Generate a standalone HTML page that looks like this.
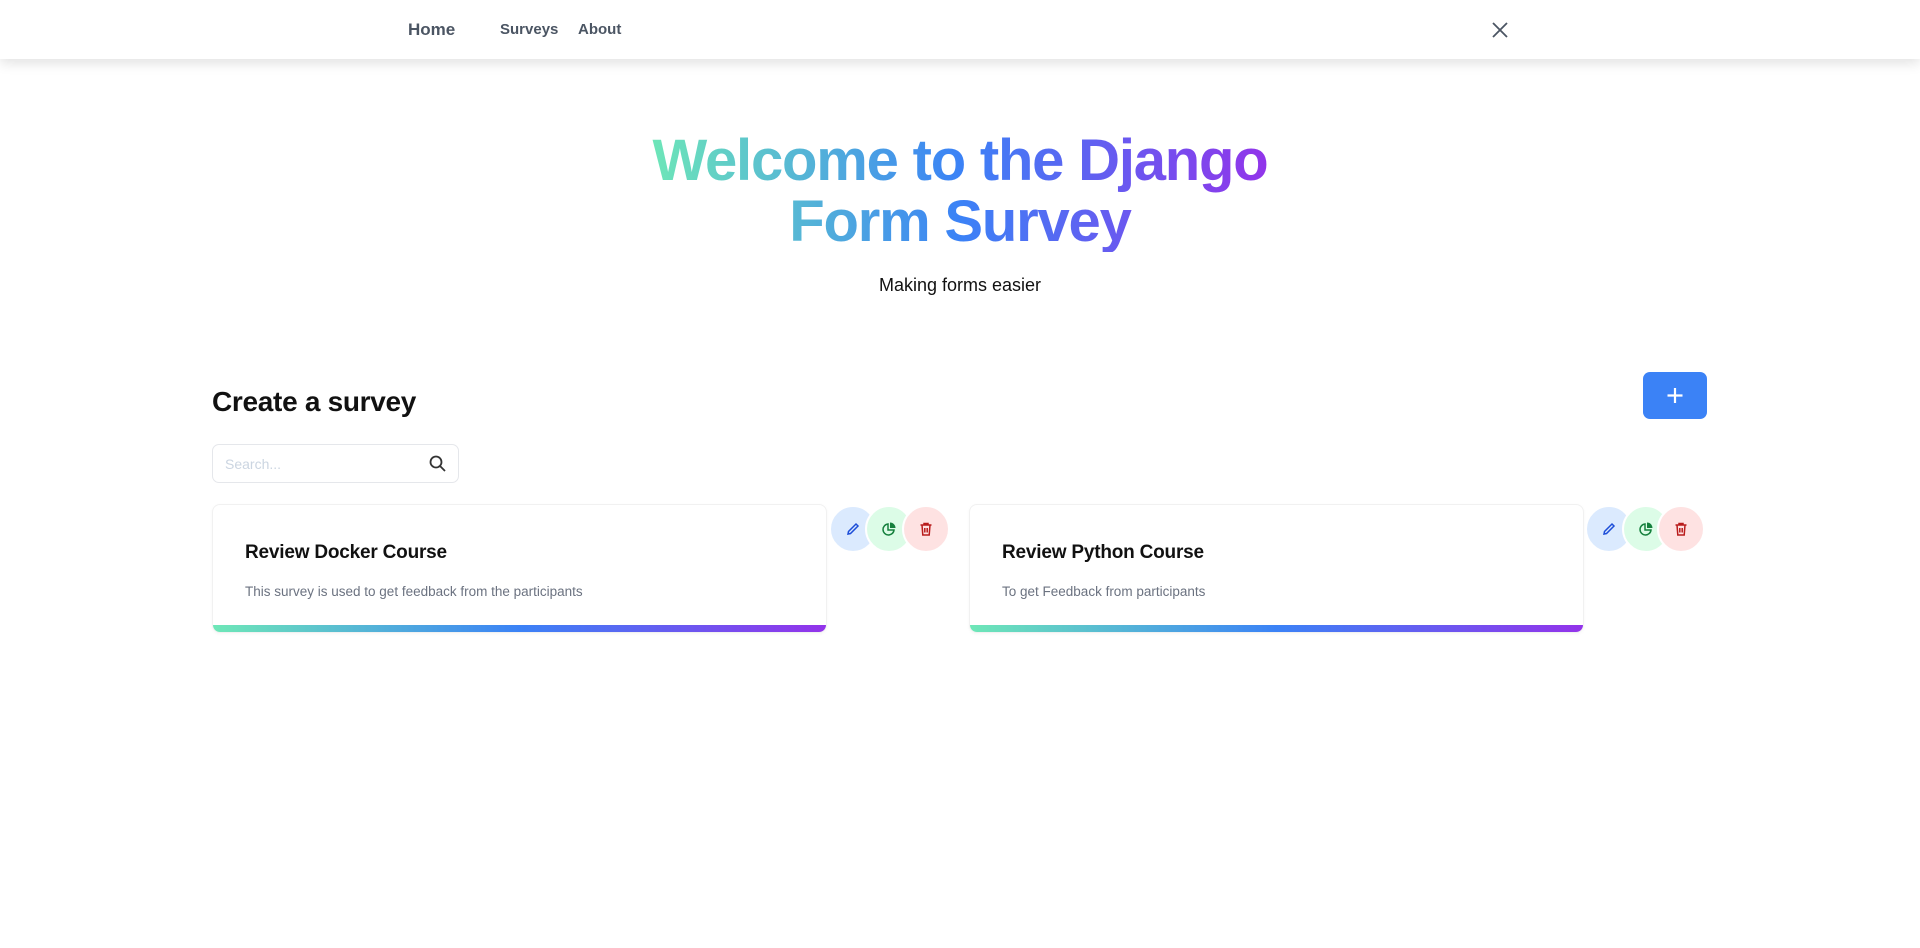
<!DOCTYPE html>
<html><head><meta charset="utf-8"><style>
*{box-sizing:border-box;margin:0;padding:0}
body{width:1920px;height:948px;background:#fff;font-family:"Liberation Sans",Roboto,sans-serif;position:relative;overflow:hidden}
nav{position:absolute;left:0;top:0;width:1920px;height:59px;background:#fff;box-shadow:0 4px 12px rgba(0,0,0,.12)}
.nl{position:absolute;top:21px;color:#4b5563;font-weight:bold;font-size:15px}
.x{position:absolute;left:1490px;top:20px}
h1{position:absolute;left:0;width:1920px;top:130px;text-align:center;font-size:58px;line-height:61px;font-weight:bold;letter-spacing:-1.2px}
h1 span{background:linear-gradient(90deg,#6ee7b7,#3b82f6,#9333ea);-webkit-background-clip:text;background-clip:text;color:transparent;display:inline-block;padding:0 4px}
.sub{position:absolute;left:0;width:1920px;top:275px;text-align:center;font-size:18px;color:#111}
h2{position:absolute;left:212px;top:386px;font-size:28px;font-weight:bold;color:#111;letter-spacing:-0.3px}
.plus{position:absolute;left:1643px;top:372px;width:64px;height:47px;background:#3b82f6;border-radius:7px}
.search{position:absolute;left:212px;top:444px;width:247px;height:39px;border:1px solid #e5e7eb;border-radius:7px;color:#cbd5e1;font-size:14px;padding:11px 12px}
.card{position:absolute;top:504px;width:615px;height:129px;border:1px solid #f1f1f1;border-radius:8px;overflow:hidden;box-shadow:0 1px 3px rgba(0,0,0,.04)}
.card h3{position:absolute;left:32px;top:37px;font-size:19px;color:#111;font-weight:bold;letter-spacing:-0.2px}
.card p{position:absolute;left:32px;top:79px;font-size:13.5px;color:#6b7280}
.card .bar{position:absolute;left:0;bottom:0;width:100%;height:7px;background:linear-gradient(90deg,#6ee7b7,#3b82f6,#9333ea)}
.c{position:absolute;top:505px;width:48px;height:48px;border-radius:50%;display:flex;align-items:center;justify-content:center;border:2px solid #fff}
.b{background:#dbeafe}.g{background:#dcfce7}.r{background:#fee2e2}
</style></head><body>
<nav>
<span class="nl" style="left:408px;font-size:17px;top:20px">Home</span>
<span class="nl" style="left:500px">Surveys</span>
<span class="nl" style="left:578px">About</span>
<svg class="x" width="20" height="20" viewBox="0 0 20 20"><path d="M3 3L17 17M17 3L3 17" stroke="#4b5563" stroke-width="1.8"/></svg>
</nav>
<h1><span>Welcome to the Django<br>Form Survey</span></h1>
<div class="sub">Making forms easier</div>
<h2>Create a survey</h2>
<div class="plus"><svg width="64" height="47" viewBox="0 0 64 47"><path d="M32 16V31M24.5 23.5H39.5" stroke="#fff" stroke-width="2.2"/></svg></div>
<div class="search">Search...<svg style="position:absolute;right:10px;top:9px" width="20" height="20" viewBox="0 0 20 20"><circle cx="8" cy="8" r="5.5" fill="none" stroke="#333" stroke-width="1.8"/><path d="M12 12L17 17" stroke="#333" stroke-width="1.8"/></svg></div>

<div class="card" style="left:212px"><h3>Review Docker Course</h3><p>This survey is used to get feedback from the participants</p><div class="bar"></div></div>
<div class="card" style="left:969px"><h3>Review Python Course</h3><p>To get Feedback from participants</p><div class="bar"></div></div>

<div class="c b" style="left:829px"><svg width="16" height="16" viewBox="0 0 16 16"><path d="M3 13L3.5 10.5L11 3L13 5L5.5 12.5Z" fill="none" stroke="#1d4ed8" stroke-width="1.5"/></svg></div>
<div class="c g" style="left:865px"><svg width="16" height="16" viewBox="0 0 16 16"><path d="M7 3A5.5 5.5 0 1 0 13 9H7Z" fill="none" stroke="#15803d" stroke-width="1.5"/><path d="M9 1.5V7H14.5A5.5 5.5 0 0 0 9 1.5Z" fill="#15803d"/></svg></div>
<div class="c r" style="left:902px"><svg width="16" height="16" viewBox="0 0 16 16"><path d="M2.5 4H13.5M6 4V2.5H10V4M4 4L4.8 14H11.2L12 4M6.8 7V11.5M9.2 7V11.5" fill="none" stroke="#b91c1c" stroke-width="1.5"/></svg></div>

<div class="c b" style="left:1585px"><svg width="16" height="16" viewBox="0 0 16 16"><path d="M3 13L3.5 10.5L11 3L13 5L5.5 12.5Z" fill="none" stroke="#1d4ed8" stroke-width="1.5"/></svg></div>
<div class="c g" style="left:1622px"><svg width="16" height="16" viewBox="0 0 16 16"><path d="M7 3A5.5 5.5 0 1 0 13 9H7Z" fill="none" stroke="#15803d" stroke-width="1.5"/><path d="M9 1.5V7H14.5A5.5 5.5 0 0 0 9 1.5Z" fill="#15803d"/></svg></div>
<div class="c r" style="left:1657px"><svg width="16" height="16" viewBox="0 0 16 16"><path d="M2.5 4H13.5M6 4V2.5H10V4M4 4L4.8 14H11.2L12 4M6.8 7V11.5M9.2 7V11.5" fill="none" stroke="#b91c1c" stroke-width="1.5"/></svg></div>
</body></html>
